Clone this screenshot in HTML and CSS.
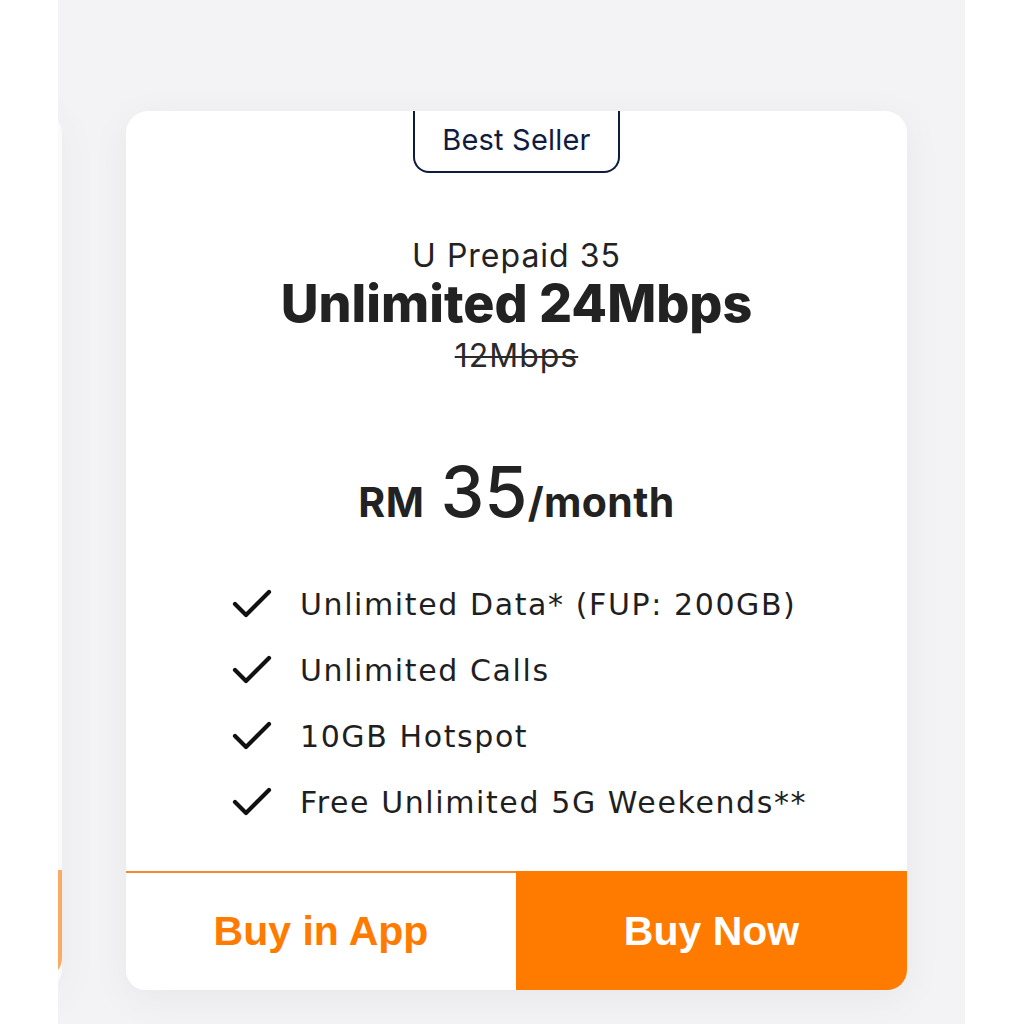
FILE: index.html
```html
<!DOCTYPE html>
<html>
<head>
<meta charset="utf-8">
<link rel="stylesheet" href="styles.css">
</head>
<body>
<div class="panel">
  <div class="track">
    <div class="card ghost">
      <div class="ghost-body"></div>
      <div class="ghost-btn"></div>
    </div>
    <div class="card">
      <div class="card-body">
        <div class="badge">Best Seller</div>
        <div class="plan-name">U Prepaid 35</div>
        <div class="plan-speed">Unlimited 24Mbps</div>
        <div class="plan-old">12Mbps</div>
        <div class="price"><span class="cur">RM</span><span class="amt">35</span><span class="per">/month</span></div>
        <ul class="features">
          <li><svg class="check" viewBox="0 0 40 30"><polyline points="3,15 14,26 37,3"/></svg><span>Unlimited Data* (FUP: 200GB)</span></li>
          <li><svg class="check" viewBox="0 0 40 30"><polyline points="3,15 14,26 37,3"/></svg><span>Unlimited Calls</span></li>
          <li><svg class="check" viewBox="0 0 40 30"><polyline points="3,15 14,26 37,3"/></svg><span>10GB Hotspot</span></li>
          <li><svg class="check" viewBox="0 0 40 30"><polyline points="3,15 14,26 37,3"/></svg><span>Free Unlimited 5G Weekends**</span></li>
        </ul>
      </div>
      <div class="actions">
        <div class="btn btn-app">Buy in App</div>
        <div class="btn btn-now">Buy Now</div>
      </div>
    </div>
  </div>
</div>
</body>
</html>
```
FILE: styles.css
```css
html, body {
  margin: 0;
  padding: 0;
  background: #ffffff;
}
.panel {
  margin-left: 58px;
  width: 907px;
  height: 1024px;
  background: #f3f3f5;
  overflow: hidden;
  padding-top: 111px;
  box-sizing: border-box;
}
.track {
  display: flex;
  gap: 64px;
  margin-left: -777px;
}
.card {
  flex: 0 0 781px;
  height: 879px;
  background: #ffffff;
  border-radius: 22px 22px 20px 20px;
  display: flex;
  flex-direction: column;
  overflow: hidden;
  box-shadow: 0 8px 40px rgba(0, 0, 0, 0.05);
}
.ghost {
  opacity: 0.6;
}
.ghost-body {
  flex: 1;
}
.ghost-btn {
  height: 108px;
  background: #ff7b00;
  margin-bottom: 12px;
  border-radius: 0 0 20px 0;
}
.card-body {
  flex: 1;
  display: flex;
  flex-direction: column;
  align-items: center;
  font-family: Inter, "Noto Sans", sans-serif;
  color: #222222;
}
.badge {
  width: 207px;
  height: 62px;
  box-sizing: border-box;
  border: 2px solid #0f1c3f;
  border-top: none;
  border-radius: 0 0 16px 16px;
  color: #0f1c3f;
  font-size: 29px;
  line-height: 58px;
  text-align: center;
  letter-spacing: 0.2px;
}
.plan-name {
  margin-top: 63px;
  font-size: 32px;
  line-height: 40px;
  letter-spacing: 1px;
}
.plan-speed {
  font-size: 52px;
  font-weight: 800;
  line-height: 54px;
  margin-top: 1px;
  letter-spacing: 0;
}
.plan-old {
  margin-top: 7px;
  font-size: 32px;
  line-height: 36px;
  letter-spacing: 1px;
  text-decoration: line-through;
  text-decoration-thickness: 2px;
  color: #2a2a2a;
}
.price {
  margin-top: 78px;
  line-height: 80px;
  height: 80px;
  white-space: nowrap;
}
.cur {
  font-size: 41px;
  font-weight: 700;
  margin-right: 16px;
  letter-spacing: 0.5px;
}
.amt {
  font-size: 70px;
  font-weight: 500;
  letter-spacing: 0;
}
.per {
  font-size: 41px;
  font-weight: 700;
  letter-spacing: 0.4px;
}
.features {
  list-style: none;
  margin: 39px 0 0 0;
  padding: 0;
  align-self: flex-start;
  margin-left: 106px;
  font-family: "DejaVu Sans", sans-serif;
  font-size: 30px;
  letter-spacing: 1.6px;
  color: #1f1f1f;
}
.features li {
  display: flex;
  align-items: center;
  height: 66px;
}
.check {
  width: 40px;
  height: 30px;
  margin-right: 28px;
  fill: none;
  stroke: #111111;
  stroke-width: 4.2;
  stroke-linecap: round;
  stroke-linejoin: round;
}
.actions {
  display: flex;
  height: 119px;
}
.btn {
  flex: 1;
  display: flex;
  align-items: center;
  justify-content: center;
  font-family: "Liberation Sans", Arial, sans-serif;
  font-weight: 700;
  font-size: 41px;
  letter-spacing: 0;
}
.btn-app {
  flex: 0 0 390px;
  border-top: 2px solid #f08a33;
  color: #ff7b00;
  background: #ffffff;
}
.btn-now {
  background: #ff7b00;
  color: #ffffff;
  padding-top: 2px;
}
```
